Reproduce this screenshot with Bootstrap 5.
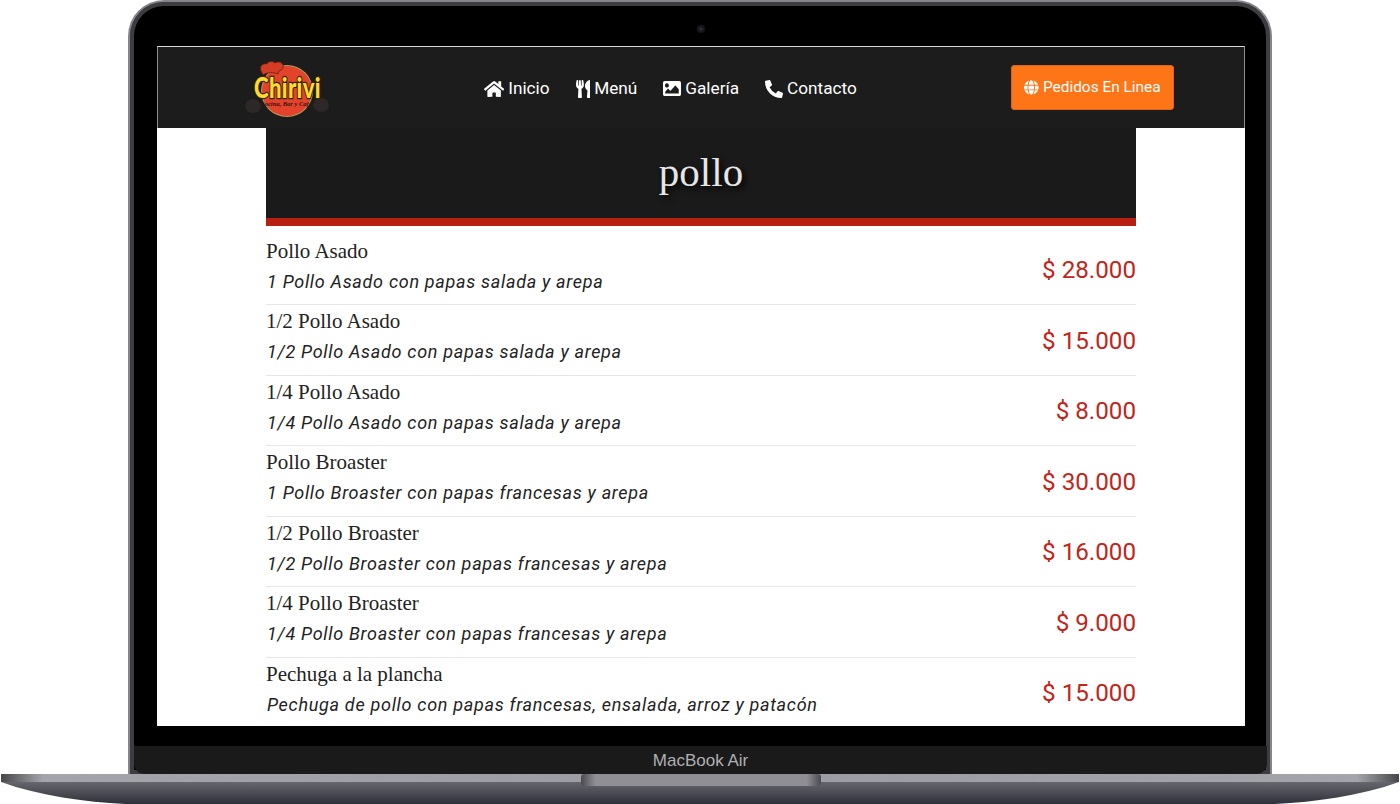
<!DOCTYPE html>
<html lang="es">
<head>
<meta charset="utf-8">
<title>Chirivi</title>
<link href="https://cdn.jsdelivr.net/npm/bootstrap@5.3.0/dist/css/bootstrap.min.css" rel="stylesheet">
<style>
html,body{height:804px;overflow:hidden;background:#fff;margin:0}
.lid{width:1144px;height:774px;border:2px solid #85858b;border-bottom:0;border-radius:36px 36px 0 0;background:#000;box-shadow:inset 0 0 0 4px #3c3c41;padding:0 25px 0 27px;box-sizing:border-box}
.cam-row{height:44px;padding-top:10px}
.cam-dot{width:8px;height:8px;border-radius:50%;background:#2c2c33;border:2px solid #17171b;background-clip:padding-box}
.screen{height:680px;background:#fff;overflow:hidden}
.topbar{height:82px;background:#1c1c1c;border:1px solid #8d8d8d;border-bottom:0;border-top-color:#d8d8d8;padding:0 70px 0 87px}
.logo-box{width:85px;height:72px;margin-right:154px}
.menu-links{gap:26px;padding-top:2px}
.menu-links a{font:400 17.2px/1 Roboto,sans-serif;color:#fff;text-decoration:none;gap:4px}
.menu-links svg{height:18px;width:auto;fill:#fff}
.menu-links svg.pic-icon{width:18px;height:15px}
.order-btn{width:163px;height:45px;background:#fd7517;border:1px solid #d9661a;border-radius:3px;color:#fff;font:400 15.4px/1 Roboto,sans-serif;gap:4px;padding:0}
.order-btn:hover{background:#fd7517;color:#fff}
.order-btn svg{height:15px;width:auto;fill:#fff}
.sheet{width:870px}
.sheet-head{height:98px;background:#1a1a1a;border-bottom:8px solid #b91f10;padding-bottom:2px}
.sheet-head h1{font:400 41px/1 "Liberation Serif",serif;color:#e6e6e6;text-shadow:3px 3px 6px #000;margin:0}
.dish{height:70.5px;border-bottom:1px solid #e6e6e6}
.first-dish{margin-top:9px;height:70px}
.dish-text{padding-top:4px}
.dish-name{font:400 21px/24px "Liberation Serif",serif;color:#222}
.dish-desc{font:italic 400 18px/28px Roboto,sans-serif;letter-spacing:.7px;color:#222;margin-top:5px;padding-left:1px}
.dish-price{font:400 24.2px/1 Roboto,sans-serif;color:#c0261b;padding-top:2px}
.chin{height:28px;margin:20px -22px 0 -23px;background:#1a1a1b;border-radius:0 0 10px 10px;color:#b0b0b2;font:400 17px/30px "Liberation Sans",sans-serif}
.base-art{display:block;width:1400px;height:30px}
</style>
</head>
<body>
<div class="lid mx-auto d-flex flex-column">
  <div class="cam-row d-flex justify-content-center align-items-center"><span class="cam-dot"></span></div>
  <div class="screen">
    <nav class="topbar d-flex align-items-center">
      <svg class="logo-box" viewBox="245 51 85 72" role="img" aria-label="Chirivi">
        <ellipse cx="253" cy="105" rx="8" ry="7" fill="#2b2827"/>
        <ellipse cx="321" cy="104" rx="8" ry="7" fill="#2b2827"/>
        <circle cx="287" cy="90" r="26" fill="#b09a5a"/>
        <circle cx="287" cy="90" r="25" fill="#e2432a"/>
        <path d="M261 70c-2-5 2-8 6-7 1-3 6-3 8-1 3-2 7-1 8 2 1 3-1 5-4 6l-1 3c-5-2-10-2-15 1z" fill="#d53c24" stroke="#5a1a10" stroke-width=".7"/>
        <text transform="translate(287.500 96.500) scale(.92 1.2)" text-anchor="middle" font-family="Lato,sans-serif" font-weight="900" font-size="24" letter-spacing=".4" fill="#ffd92e" stroke="#33240c" stroke-width="2" paint-order="stroke">Chirivi</text>
        <text x="286" y="105" text-anchor="middle" font-family="Liberation Serif,serif" font-style="italic" font-weight="700" font-size="6.500" fill="#3a1210">Cocina, Bar y Café</text>
      </svg>
      <div class="menu-links d-flex align-items-center">
        <a class="d-flex align-items-center" href="#"><svg viewBox="0 0 576 512"><path d="M280.37 148.26L96 300.11V464a16 16 0 0 0 16 16l112.06-.29a16 16 0 0 0 15.92-16V368a16 16 0 0 1 16-16h64a16 16 0 0 1 16 16v95.64a16 16 0 0 0 16 16.05L464 480a16 16 0 0 0 16-16V300L295.67 148.26a12.19 12.19 0 0 0-15.3 0zM571.6 251.47L488 182.56V44.05a12 12 0 0 0-12-12h-56a12 12 0 0 0-12 12v72.61L318.47 43a48 48 0 0 0-61 0L4.34 251.47a12 12 0 0 0-1.6 16.9l25.5 31A12 12 0 0 0 45.15 301l235.22-193.74a12.19 12.19 0 0 1 15.3 0L530.9 301a12 12 0 0 0 16.9-1.6l25.5-31a12 12 0 0 0-1.7-16.93z"/></svg>Inicio</a>
        <a class="d-flex align-items-center" href="#"><svg viewBox="0 0 416 512"><path d="M207.9 15.2c.8 4.7 16.1 94.5 16.1 128.8 0 52.3-27.8 89.6-68.9 104.6L168 486.7c.7 13.7-10.2 25.3-24 25.3H80c-13.7 0-24.7-11.5-24-25.3l12.9-238.1C27.7 233.6 0 196.2 0 144 0 109.6 15.3 19.9 16.1 15.2 19.3-5.1 61.4-5.4 64 16.3v141.2c1.3 3.4 15.1 3.2 16 0 1.4-25.3 7.9-139.2 8-141.8 3.3-20.8 44.7-20.8 47.9 0 .2 2.7 6.6 116.5 8 141.8.9 3.2 14.8 3.4 16 0V16.3c2.6-21.6 44.8-21.4 48-1.1zm119.2 285.7l-15 185.1c-1.2 14 9.9 26 23.9 26h56c13.3 0 24-10.7 24-24V24c0-13.2-10.7-24-24-24-82.5 0-221.4 178.5-64.9 300.9z"/></svg>Menú</a>
        <a class="d-flex align-items-center" href="#"><svg class="pic-icon" viewBox="0 64 512 384" preserveAspectRatio="none"><path d="M464 448H48c-26.51 0-48-21.49-48-48V112c0-26.51 21.49-48 48-48h416c26.51 0 48 21.49 48 48v288c0 26.51-21.49 48-48 48zM112 120c-30.928 0-56 25.072-56 56s25.072 56 56 56 56-25.072 56-56-25.072-56-56-56zM64 384h384V272l-87.515-87.515c-4.686-4.686-12.284-4.686-16.971 0L208 320l-55.515-55.515c-4.686-4.686-12.284-4.686-16.971 0L64 336v48z"/></svg>Galería</a>
        <a class="d-flex align-items-center" href="#"><svg viewBox="0 0 512 512"><path d="M497.39 361.8l-112-48a24 24 0 0 0-28 6.9l-49.6 60.6A370.66 370.66 0 0 1 130.6 204.11l60.6-49.6a23.94 23.94 0 0 0 6.9-28l-48-112A24.16 24.16 0 0 0 122.6.61l-104 24A24 24 0 0 0 0 48c0 256.5 207.9 464 464 464a24 24 0 0 0 23.4-18.6l24-104a24.29 24.29 0 0 0-14.01-27.6z"/></svg>Contacto</a>
      </div>
      <a class="order-btn btn ms-auto d-flex align-items-center justify-content-center" href="#"><svg viewBox="0 0 496 512"><path d="M336.5 160C322 70.7 287.8 8 248 8s-74 62.7-88.5 152h177zM152 256c0 22.2 1.2 43.5 3.3 64h185.3c2.1-20.5 3.3-41.8 3.3-64s-1.2-43.5-3.3-64H155.3c-2.1 20.5-3.3 41.8-3.3 64zm324.7-96c-28.6-67.9-86.5-120.4-158-141.6 24.4 33.8 41.2 84.7 50 141.6h108zM177.2 18.4C105.8 39.6 47.8 92.1 19.3 160h108c8.7-56.9 25.5-107.8 49.9-141.6zM487.4 192H372.7c2.1 21 3.3 42.5 3.3 64s-1.2 43-3.3 64h114.6c5.5-20.5 8.6-41.8 8.6-64s-3.1-43.5-8.5-64zM120 256c0-21.5 1.2-43 3.3-64H8.6C3.2 212.5 0 233.8 0 256s3.2 43.5 8.6 64h114.6c-2-21-3.2-42.5-3.2-64zm39.5 96c14.5 89.3 48.7 152 88.5 152s74-62.7 88.5-152h-177zm159.3 141.6c71.4-21.2 129.4-73.7 158-141.6h-108c-8.8 56.9-25.6 107.8-50 141.6zM19.3 352c28.6 67.9 86.5 120.4 158 141.6-24.4-33.8-41.2-84.7-50-141.6h-108z"/></svg>Pedidos En Linea</a>
    </nav>
    <main class="sheet mx-auto">
      <div class="sheet-head d-flex align-items-center justify-content-center"><h1>pollo</h1></div>
      <div class="dish first-dish d-flex justify-content-between align-items-center">
        <div class="dish-text align-self-start"><div class="dish-name">Pollo Asado</div><div class="dish-desc">1 Pollo Asado con papas salada y arepa</div></div><div class="dish-price">$ 28.000</div>
      </div>
      <div class="dish d-flex justify-content-between align-items-center">
        <div class="dish-text align-self-start"><div class="dish-name">1/2 Pollo Asado</div><div class="dish-desc">1/2 Pollo Asado con papas salada y arepa</div></div><div class="dish-price">$ 15.000</div>
      </div>
      <div class="dish d-flex justify-content-between align-items-center">
        <div class="dish-text align-self-start"><div class="dish-name">1/4 Pollo Asado</div><div class="dish-desc">1/4 Pollo Asado con papas salada y arepa</div></div><div class="dish-price">$ 8.000</div>
      </div>
      <div class="dish d-flex justify-content-between align-items-center">
        <div class="dish-text align-self-start"><div class="dish-name">Pollo Broaster</div><div class="dish-desc">1 Pollo Broaster con papas francesas y arepa</div></div><div class="dish-price">$ 30.000</div>
      </div>
      <div class="dish d-flex justify-content-between align-items-center">
        <div class="dish-text align-self-start"><div class="dish-name">1/2 Pollo Broaster</div><div class="dish-desc">1/2 Pollo Broaster con papas francesas y arepa</div></div><div class="dish-price">$ 16.000</div>
      </div>
      <div class="dish d-flex justify-content-between align-items-center">
        <div class="dish-text align-self-start"><div class="dish-name">1/4 Pollo Broaster</div><div class="dish-desc">1/4 Pollo Broaster con papas francesas y arepa</div></div><div class="dish-price">$ 9.000</div>
      </div>
      <div class="dish d-flex justify-content-between align-items-center">
        <div class="dish-text align-self-start"><div class="dish-name">Pechuga a la plancha</div><div class="dish-desc">Pechuga de pollo con papas francesas, ensalada, arroz y patacón</div></div><div class="dish-price">$ 15.000</div>
      </div>
    </main>
  </div>
  <div class="chin text-center">MacBook Air</div>
</div>
<svg class="base-art" viewBox="0 0 1400 30" aria-hidden="true">
  <defs>
    <linearGradient id="bodyGrad" x1="0" y1="0" x2="0" y2="1"><stop offset="0" stop-color="#66666e"/><stop offset="1" stop-color="#2f3039"/></linearGradient>
    <linearGradient id="rimGrad" x1="0" y1="0" x2="1" y2="0"><stop offset="0" stop-color="#47474b"/><stop offset=".03" stop-color="#a4a4aa"/><stop offset=".5" stop-color="#9b9ba1"/><stop offset=".97" stop-color="#a4a4aa"/><stop offset="1" stop-color="#47474b"/></linearGradient>
    <linearGradient id="notchGrad" x1="0" y1="0" x2="1" y2="0"><stop offset="0" stop-color="#4a4a50"/><stop offset=".06" stop-color="#8f8f95"/><stop offset=".94" stop-color="#8f8f95"/><stop offset="1" stop-color="#4a4a50"/></linearGradient>
  </defs>
  <path d="M1 8C40 22 85 28 125 30H1275C1315 28 1360 22 1399 8Z" fill="url(#bodyGrad)"/>
  <path d="M1 0H1399V8H1Z" fill="url(#rimGrad)"/>
  <rect x="581" y="0" width="240" height="12" rx="3" fill="url(#notchGrad)"/>
</svg>
</body>
</html>
